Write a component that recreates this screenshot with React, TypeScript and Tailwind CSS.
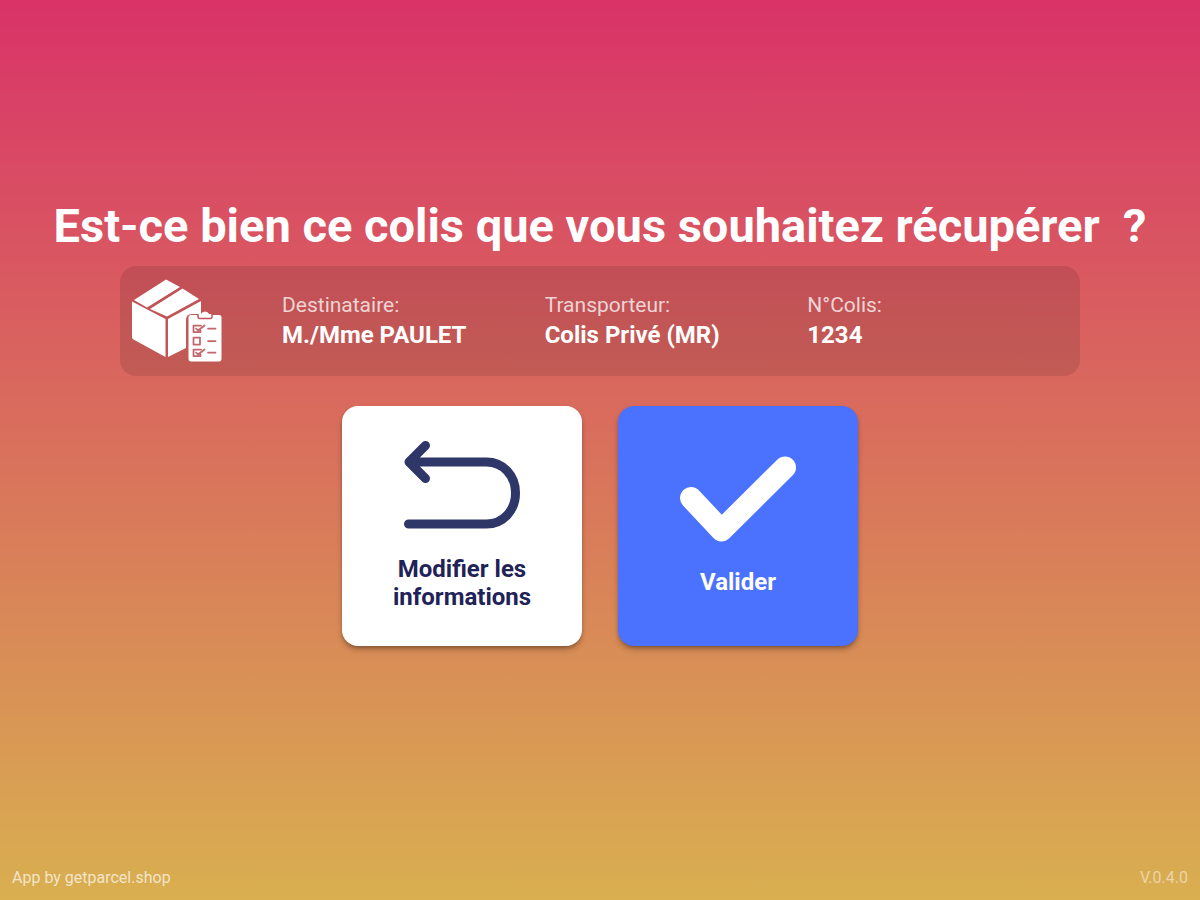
const details = [
  { label: "Destinataire:", value: "M./Mme PAULET" },
  { label: "Transporteur:", value: "Colis Privé (MR)" },
  { label: "N°Colis:", value: "1234" },
];

function ParcelIcon() {
  return (
    <svg viewBox="0 0 90 84" className="w-[90px] shrink-0" fill="none" aria-hidden="true">
      <path d="M34 0.500 48 8 15 28.500 2 21Z" fill="#fff" />
      <path d="M50.500 9.500 67 20 35 37.500 18 30Z" fill="#fff" />
      <path d="M0 22.500 33.500 40V78L1.500 60.500Q0 59.500 0 58Z" fill="#fff" />
      <path d="M36 40 69 22V35H60Q54 35 54 41V69L36 78Z" fill="#fff" />
      <path
        d="M59 36H87Q89.500 36 89.500 38.500V79.500Q89.500 82.500 87 82.500H59Q56.500 82.500 56.500 79.500V38.500Q56.500 36 59 36Z"
        fill="#fff"
      />
      <path
        d="M66 35H69Q70 32.500 73 32.500Q76 32.500 77 35H80V38Q80 39.500 78.500 39.500H67.500Q66 39.500 66 38Z"
        fill="#fff"
      />
      <path d="M66 35V38Q66 39.500 67.500 39.500H78.500Q80 39.500 80 38V35" stroke="#c3565a" strokeWidth="1.500" />
      <g stroke="#c3656a" strokeWidth="1.750" strokeLinecap="round" strokeLinejoin="round">
        <path d="M69 46.500H61.500V53H68.500V51.500M64 49.500 66 51.500 72.500 46.500" />
        <path d="M61.500 58.500H68V65.500H61.500Z" />
        <path d="M69 70.500H61.500V77H68.500V75.500M64 73.500 66 75.500 72.500 70.500" />
        <path d="M76 49.500H83.500M76 62H83.500M76 73.500H83.500" />
      </g>
    </svg>
  );
}

function ReturnIcon() {
  return (
    <svg viewBox="0 0 116 88" className="w-[116px]" fill="none" aria-hidden="true">
      <path
        d="M4.500 83H82.500C99 83 111.500 69.500 111.500 52S99 21 82.500 21H6M21.500 4.500 5 21 21.500 37.500"
        stroke="#2e3768"
        strokeWidth="9"
        strokeLinecap="round"
        strokeLinejoin="round"
      />
    </svg>
  );
}

function CheckIcon() {
  return (
    <svg viewBox="0 0 116 86" className="w-[116px]" fill="none" aria-hidden="true">
      <path
        d="M11 42 41.500 74.500 105 11.500"
        stroke="#fff"
        strokeWidth="22"
        strokeLinecap="round"
        strokeLinejoin="round"
      />
    </svg>
  );
}

export default function App() {
  return (
    <div className="flex min-h-screen flex-col bg-linear-to-b/srgb from-[#d93368] to-[#d9af50] font-[Roboto,sans-serif] text-white">
      <main className="flex flex-1 flex-col items-center justify-center pb-5">
        <h1 className="text-center text-[47px] leading-[56px] font-bold">
          Est-ce bien ce colis que vous souhaitez récupérer&nbsp; ?
        </h1>

        <section className="mt-3 flex w-4/5 items-center gap-15 rounded-2xl bg-black/10 py-[13px] pr-[10px] pl-3">
          <ParcelIcon />
          <dl className="grid flex-1 grid-cols-3">
            {details.map((item) => (
              <div key={item.label}>
                <dt className="text-[21px] leading-7 text-white/75">{item.label}</dt>
                <dd className="text-2xl font-bold">{item.value}</dd>
              </div>
            ))}
          </dl>
        </section>

        <div className="mt-[30px] flex flex-wrap justify-center gap-9">
          <button
            type="button"
            className="flex size-60 flex-col items-center justify-center gap-[26px] rounded-2xl bg-white text-2xl leading-7 font-bold text-[#1f2358] shadow-md shadow-black/30"
          >
            <ReturnIcon />
            <span className="w-40">Modifier les informations</span>
          </button>
          <button
            type="button"
            className="flex size-60 flex-col items-center justify-center gap-[26px] rounded-2xl bg-[#4b71ff] text-2xl leading-7 font-bold text-white shadow-md shadow-black/30"
          >
            <CheckIcon />
            <span>Valider</span>
          </button>
        </div>
      </main>

      <footer className="flex items-center justify-between px-3 pb-2 text-base leading-7">
        <p className="text-white/70">App by getparcel.shop</p>
        <p className="text-white/50">V.0.4.0</p>
      </footer>
    </div>
  );
}
